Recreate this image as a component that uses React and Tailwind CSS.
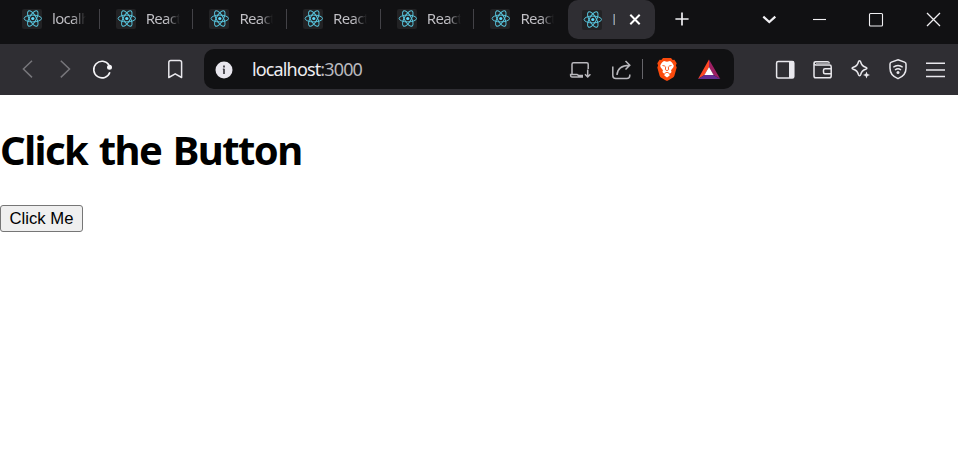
import React from 'react';

const UI_FONT = "font-['Noto_Sans','Open_Sans',sans-serif]";

function Icon({ children, className = '' }) {
  return (
    <svg
      viewBox="0 0 24 24"
      fill="none"
      stroke="currentColor"
      strokeWidth="1.5"
      className={`h-6 w-6 shrink-0 ${className}`}
    >
      {children}
    </svg>
  );
}

function ReactLogo() {
  return (
    <svg viewBox="0 0 20 20" className="h-5 w-5 shrink-0" fill="none" stroke="#58c4dc" strokeWidth="1">
      <rect width="20" height="20" rx="2" fill="#222224" stroke="none" />
      <ellipse cx="10.8" cy="9.5" rx="8.7" ry="3.4" />
      <ellipse cx="10.8" cy="9.5" rx="8.7" ry="3.4" transform="rotate(60 10.8 9.5)" />
      <ellipse cx="10.8" cy="9.5" rx="8.7" ry="3.4" transform="rotate(120 10.8 9.5)" />
      <circle cx="10.8" cy="9.5" r="1.6" fill="#61dafb" stroke="none" />
    </svg>
  );
}

function Tab({ title, last }) {
  return (
    <div className="flex h-[38px] w-[93.7px] shrink-0 items-center pl-4">
      <ReactLogo />
      <div className="mb-[2px] ml-[10px] w-[34px] overflow-hidden whitespace-nowrap bg-linear-to-r from-[#c3c2c7] from-60% to-transparent bg-clip-text text-[15px] leading-5 tracking-[-0.7px] text-transparent">
        {title}
      </div>
      {!last && <div className="ml-auto h-5 w-px bg-[#434247]" />}
    </div>
  );
}

function TabStrip() {
  const titles = ['localhost', 'React App', 'React App', 'React App', 'React App', 'React App'];
  return (
    <div className="flex h-11 items-start bg-[#111113] pl-[6px]">
      {titles.map((t, i) => (
        <Tab key={i} title={t} last={i === titles.length - 1} />
      ))}
      <div className="flex h-[39px] w-[87px] shrink-0 items-center rounded-[10px] bg-[#2f2e33] pl-[14px]">
        <ReactLogo />
        <div className="mb-[2px] ml-[10px] w-[3px] overflow-hidden text-[15px] leading-5 text-[#a9a8ad]">l</div>
        <Icon className="ml-[8px] text-white">
          <path d="M7.3 6.8l9.4 9.4M16.7 6.8l-9.4 9.4" strokeWidth="2" />
        </Icon>
      </div>
      <div className="flex h-[38px] items-center pl-[15px] text-[#f0eff2]">
        <Icon><path d="M12 5.4v13.2M5.4 12h13.2" strokeWidth="1.7" /></Icon>
        <Icon className="ml-[63px]"><path d="M6.3 9.6l6 5.4 6-5.4" strokeWidth="2.2" /></Icon>
        <Icon className="ml-[26px]"><path d="M6 12.5h13" strokeWidth="1.1" /></Icon>
        <Icon className="ml-[33px]"><rect x="5.5" y="6.5" width="13" height="12.5" rx="1" strokeWidth="1.1" /></Icon>
        <Icon className="ml-[33px]"><path d="M6 6l13 13M19 6L6 19" strokeWidth="1.3" /></Icon>
      </div>
    </div>
  );
}

function BraveLogo() {
  return (
    <Icon>
      <path
        d="M8 1h8l1.7 2 1.7-.2 2.3 3.4-.8 2.2.8 2.1-2.3 8.3c-.5 1.4-1.5 2.1-7.4 5.2-5.9-3.1-6.9-3.8-7.4-5.2L2.3 10.5l.8-2.1-.8-2.2 2.3-3.4L6.3 3z"
        fill="#fb4a0c"
        stroke="none"
      />
      <path
        d="M12 4.7l3-.6c1.7.8 2.7 2.2 3.8 4.6-.3 2.2-1.9 3-2.8 4.7.8 1 .5 2-.3 2.6l-1.5 1.1.5 1.3-2.7 2-2.7-2 .5-1.3L8.3 16c-.8-.6-1.1-1.6-.3-2.6-.9-1.7-2.5-2.500-2.800-4.700C6.300 6.300 7.300 4.900 9 4.100z"
        fill="#fff"
        stroke="none"
      />
      <path d="M7.500 8.500l2.600.6M16.500 8.500l-2.600.6M10.700 9.500l-.3 3.200 1.600 1 1.600-1-.3-3.200M9.500 16.500l2.500-1.300 2.500 1.300" stroke="#fb4a0c" strokeWidth="0.9" />
    </Icon>
  );
}

function BatLogo() {
  return (
    <Icon className="[&>path]:stroke-none">
      <path d="M12 2.500L1 22l6.500-4L12 10z" fill="#ff4724" />
      <path d="M12 2.500L23.300 22 16.500 18 12 10z" fill="#9e1f63" />
      <path d="M1 22h22.300l-6.800-4h-9z" fill="#662d91" />
      <path d="M12 10l4.600 8H7.400z" fill="#fff" />
    </Icon>
  );
}

function AddressBar() {
  return (
    <div className="ml-[17px] flex h-10 w-[530px] shrink-0 items-center rounded-[10px] bg-[#111113] pl-2 text-[#b9b8bd]">
      <Icon>
        <circle cx="12" cy="13" r="8.500" fill="#e8e6ed" stroke="none" />
        <path d="M12 8.500v2M12 11.700V17" stroke="#39383d" strokeWidth="1.700" />
        <path d="M10.800 12.200H12" stroke="#39383d" strokeWidth="1" />
      </Icon>
      <div className="ml-[16px] w-[316px] text-[18px] leading-6 tracking-[-0.86px] text-[#eeedf1]">
        localhost<span className="text-[#b9b8bd]">:3000</span>
      </div>
      <Icon>
        <path d="M20.200 12V7.200c0-.9-.6-1.500-1.500-1.500H5.500C4.600 5.700 4 6.300 4 7.200V17" />
        <path d="M15 20H4.200c-1.300 0-1.700-.8-1.600-2.600H9l1.500 1H15M19.700 12.500v7M17 17.200l2.700 2.800 2.700-2.800" />
      </Icon>
      <Icon className="ml-[18px]">
        <path d="M2.800 9.500v9c0 2 1 3 3 3h11c2 0 3-1 3-3v-1" />
        <path d="M7 18c.3-6 4-9.600 12.500-9.800M15.500 4l4.300 4.200-4.300 4.300" />
      </Icon>
      <div className="ml-[8px] h-5 w-px bg-[#66656a]" />
      <div className="ml-[12px] flex items-center gap-[18px]">
        <BraveLogo />
        <BatLogo />
      </div>
    </div>
  );
}

function Toolbar() {
  return (
    <div className="flex h-[51px] items-center bg-[#2f2e33] pb-px pl-[15px] text-[#e9e8ed]">
      <Icon className="text-[#77767b]"><path d="M17 3.800L8.400 12l8.600 8.400" /></Icon>
      <Icon className="ml-[14px] text-[#77767b]"><path d="M7.800 3.800l8.700 8.200-8.700 8.400" /></Icon>
      <Icon className="ml-[13px] text-[#f6f5f8]">
        <path d="M19 8A8.300 8.300 0 1 0 19.900 15.300" strokeWidth="1.600" />
        <circle cx="19.500" cy="10.300" r="2.500" fill="currentColor" stroke="none" />
      </Icon>
      <Icon className="ml-[49px]">
        <path d="M5.800 5.500c0-1.300.7-2 2-2h8.800c1.300 0 2 .7 2 2v15l-6.400-3.700-6.400 3.700z" strokeLinejoin="round" />
      </Icon>
      <AddressBar />
      <Icon className="ml-[39px]">
        <rect x="3.600" y="4.500" width="17.200" height="16.500" rx="1.500" />
        <path d="M16 4.500h5V21h-5z" fill="currentColor" stroke="none" />
      </Icon>
      <Icon className="ml-[14px]">
        <path d="M4.500 4.700h12c1 0 1.500.5 2 1.800M3 6c0 1.300.5 2 2 2h13.500c1.200 0 1.700.6 1.700 1.700V19c0 1.200-.6 1.800-1.800 1.800H4.800C3.600 20.800 3 20.200 3 19V6c0-.8.600-1.300 1.500-1.300z" />
        <path d="M20.200 11.800H14c-1 0-1.500.5-1.500 1.500v2c0 1 .5 1.500 1.500 1.500h6.200" />
        <path d="M5 6.400h13" stroke="#99989d" />
      </Icon>
      <Icon className="ml-[13px]">
        <path d="M11.500 3.800c.7 0 1 .5 1.200 1.200.8 3.300 1.800 4.300 5 5.200 1.600.5 1.600 1.700 0 2.100-3.200.9-4.200 2-5 5.200-.5 1.600-1.800 1.600-2.300 0-.8-3.200-1.900-4.300-5.100-5.200-1.600-.4-1.600-1.600 0-2.100 3.200-.9 4.300-1.900 5.100-5.200.1-.7.5-1.200 1.100-1.200z" />
        <path d="M18.500 14.500l1 2.500 2.500 1-2.500 1-1 2.500-1-2.500L15 18l2.500-1z" fill="currentColor" stroke="none" />
      </Icon>
      <Icon className="ml-[14px]">
        <path d="M12 2.800l6.600 2.300c1 .4 1.400 1 1.400 2v4.200c0 4.700-3 8.500-8 10.300-5-1.800-8-5.600-8-10.300V7.100c0-1 .4-1.600 1.400-2z" />
        <path d="M7.300 10.300c2.700-2.400 6.700-2.400 9.400 0M9 13c1.800-1.500 4.200-1.500 6 0" strokeWidth="1.400" />
        <circle cx="12" cy="15.500" r="1.500" fill="currentColor" stroke="none" />
      </Icon>
      <Icon className="ml-[14px]"><path d="M2 6.200h19M2 13h19M2 19.500h19" strokeWidth="1.500" /></Icon>
    </div>
  );
}

export default function App() {
  return (
    <div className={`h-[457px] w-[958px] overflow-hidden bg-white ${UI_FONT}`}>
      <TabStrip />
      <Toolbar />
      <main className="pt-[28px] text-black">
        <h1 className="text-[40px] leading-[54px] font-bold tracking-[-1.55px] whitespace-nowrap [word-spacing:2.6px]">
          Click the Button
        </h1>
        <button className="mt-[28px] block h-[27px] w-[83px] rounded-[3px] border border-[#767676] bg-[#efefef] font-['Liberation_Sans',sans-serif] text-[16.67px] leading-[24px] whitespace-nowrap">
          Click Me
        </button>
      </main>
    </div>
  );
}
